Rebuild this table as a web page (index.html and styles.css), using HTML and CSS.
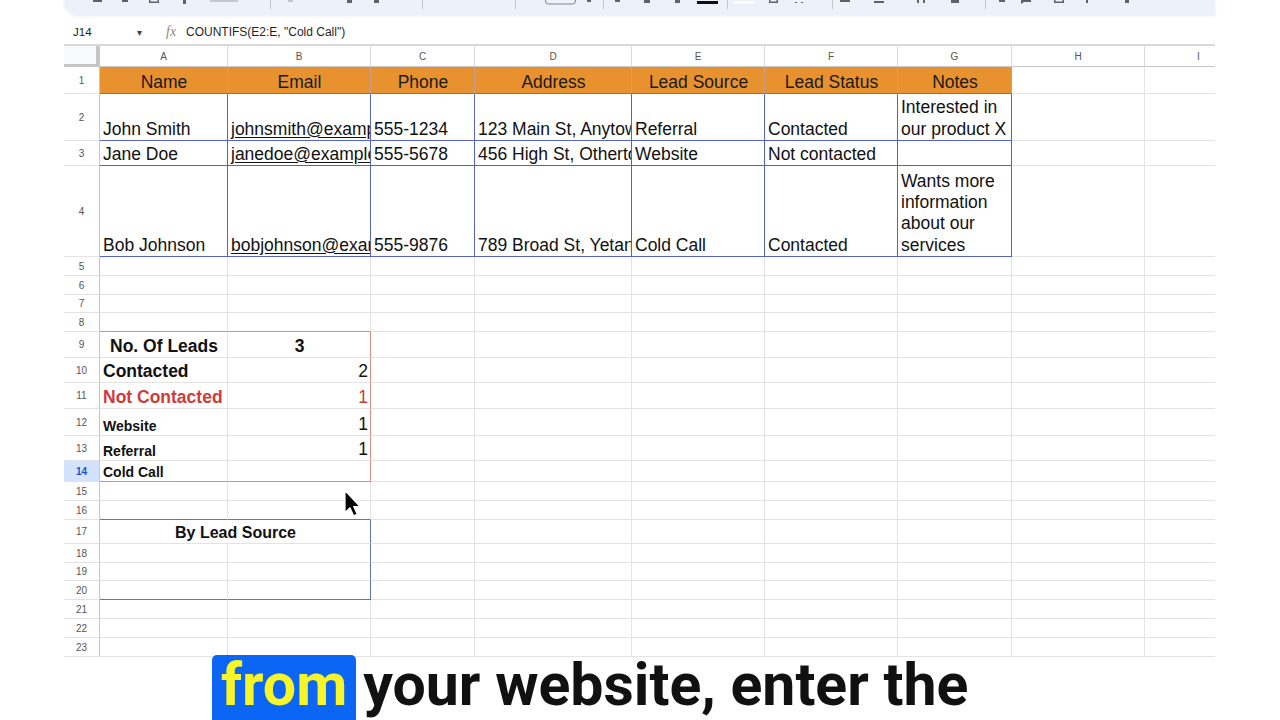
FILE: index.html
```html
<!DOCTYPE html>
<html>
<head>
<meta charset="utf-8">
<link rel="stylesheet" href="styles.css">
</head>
<body>
<div class="toolbar">
  <svg class="tb-icons" width="1151" height="15" viewBox="0 0 1151 15">
    <g fill="#5f6368">
      <rect x="29" y="0" width="9" height="2"/>
      <rect x="58" y="0" width="6" height="2"/>
      <path d="M85 0v3h10V0h-1.5v1.5h-7V0z"/>
      <rect x="119" y="0" width="3" height="4"/>
      <rect x="283" y="0" width="5" height="3"/>
      <rect x="310" y="0" width="5" height="3"/>
      <rect x="523" y="0" width="4" height="2"/>
      <rect x="551" y="0" width="5" height="2"/>
      <rect x="580" y="0" width="6" height="3"/>
      <rect x="611" y="0" width="5" height="3"/>
      <rect x="633" y="1" width="21" height="3" fill="#111"/>
      <path d="M705 0v3h9V0h-1.5v1.5h-6V0z"/>
      <rect x="731" y="2" width="2" height="1"/>
      <rect x="737" y="2" width="2" height="1"/>
      <rect x="776" y="0" width="10" height="2"/>
      <rect x="810" y="1" width="10" height="2"/>
      <rect x="853" y="0" width="2" height="3"/>
      <rect x="859" y="0" width="2" height="3"/>
      <rect x="887" y="0" width="8" height="3"/>
      <rect x="935" y="0" width="6" height="2"/>
      <path d="M957 0v4l3-2h7V0z"/>
      <path d="M990 0v3h10V0h-1.5v1.5h-7V0z"/>
      <rect x="1022" y="0" width="2" height="3"/>
      <rect x="1061" y="0" width="4" height="3"/>
    </g>
    <g fill="#c4c7cc">
      <rect x="146" y="0" width="28" height="2"/>
      <rect x="224" y="0" width="5" height="2"/>
    </g>
    <g fill="#c4c7c5">
      <rect x="206" y="0" width="1" height="9"/>
      <rect x="358" y="0" width="1" height="9"/>
      <rect x="451" y="0" width="1" height="9"/>
      <rect x="539" y="0" width="1" height="9"/>
      <rect x="663" y="0" width="1" height="9"/>
      <rect x="768" y="0" width="1" height="9"/>
      <rect x="921" y="0" width="1" height="9"/>
    </g>
    <rect x="481.5" y="-6" width="30" height="10" rx="3" fill="none" stroke="#80868b"/>
    <rect x="669" y="1" width="21" height="3" fill="#fff"/>
  </svg>
</div>

<div class="fbar">
  <span class="ref">J14</span>
  <span class="dd">&#9662;</span>
  <span class="fx">fx</span>
  <span class="formula">COUNTIFS(E2:E, "Cold Call")</span>
</div>

<div class="sheet">
  <div class="corner"></div>
  <div class="ch">A</div><div class="ch">B</div><div class="ch">C</div><div class="ch">D</div><div class="ch">E</div><div class="ch">F</div><div class="ch">G</div><div class="ch">H</div><div class="ch">I</div>

  <div class="rh">1</div>
  <div class="c hd">Name</div><div class="c hd">Email</div><div class="c hd">Phone</div><div class="c hd">Address</div><div class="c hd">Lead Source</div><div class="c hd">Lead Status</div><div class="c hd">Notes</div><div class="c"></div><div class="c"></div>

  <div class="rh">2</div>
  <div class="c bl">John Smith</div>
  <div class="c bl"><span class="u">johnsmith@example.com</span></div>
  <div class="c bl">555-1234</div>
  <div class="c bl">123 Main St, Anytown, USA</div>
  <div class="c bl">Referral</div>
  <div class="c bl">Contacted</div>
  <div class="c bl"><span>Interested in<br>our product X</span></div>
  <div class="c"></div><div class="c"></div>

  <div class="rh">3</div>
  <div class="c bl">Jane Doe</div>
  <div class="c bl"><span class="u">janedoe@example.com</span></div>
  <div class="c bl">555-5678</div>
  <div class="c bl">456 High St, Othertown, USA</div>
  <div class="c bl">Website</div>
  <div class="c bl">Not contacted</div>
  <div class="c bl"></div>
  <div class="c"></div><div class="c"></div>

  <div class="rh">4</div>
  <div class="c bl">Bob Johnson</div>
  <div class="c bl"><span class="u">bobjohnson@example.com</span></div>
  <div class="c bl">555-9876</div>
  <div class="c bl">789 Broad St, Yetanothertown, USA</div>
  <div class="c bl">Cold Call</div>
  <div class="c bl">Contacted</div>
  <div class="c bl"><span>Wants more<br>information<br>about our<br>services</span></div>
  <div class="c"></div><div class="c"></div>

  <div class="rh">5</div>
  <div class="c"></div><div class="c"></div><div class="c"></div><div class="c"></div><div class="c"></div><div class="c"></div><div class="c"></div><div class="c"></div><div class="c"></div>
  <div class="rh">6</div>
  <div class="c"></div><div class="c"></div><div class="c"></div><div class="c"></div><div class="c"></div><div class="c"></div><div class="c"></div><div class="c"></div><div class="c"></div>
  <div class="rh">7</div>
  <div class="c"></div><div class="c"></div><div class="c"></div><div class="c"></div><div class="c"></div><div class="c"></div><div class="c"></div><div class="c"></div><div class="c"></div>
  <div class="rh">8</div>
  <div class="c rb"></div><div class="c rb"></div><div class="c"></div><div class="c"></div><div class="c"></div><div class="c"></div><div class="c"></div><div class="c"></div><div class="c"></div>

  <div class="rh">9</div>
  <div class="c ctr b">No. Of Leads</div>
  <div class="c ctr b rr">3</div>
  <div class="c"></div><div class="c"></div><div class="c"></div><div class="c"></div><div class="c"></div><div class="c"></div><div class="c"></div>

  <div class="rh">10</div>
  <div class="c b">Contacted</div>
  <div class="c rt rr">2</div>
  <div class="c"></div><div class="c"></div><div class="c"></div><div class="c"></div><div class="c"></div><div class="c"></div><div class="c"></div>

  <div class="rh">11</div>
  <div class="c b red">Not Contacted</div>
  <div class="c rt rr red">1</div>
  <div class="c"></div><div class="c"></div><div class="c"></div><div class="c"></div><div class="c"></div><div class="c"></div><div class="c"></div>

  <div class="rh">12</div>
  <div class="c b sm">Website</div>
  <div class="c rt rr">1</div>
  <div class="c"></div><div class="c"></div><div class="c"></div><div class="c"></div><div class="c"></div><div class="c"></div><div class="c"></div>

  <div class="rh">13</div>
  <div class="c b sm">Referral</div>
  <div class="c rt rr">1</div>
  <div class="c"></div><div class="c"></div><div class="c"></div><div class="c"></div><div class="c"></div><div class="c"></div><div class="c"></div>

  <div class="rh sel">14</div>
  <div class="c b sm rb">Cold Call</div>
  <div class="c rr rb"></div>
  <div class="c"></div><div class="c"></div><div class="c"></div><div class="c"></div><div class="c"></div><div class="c"></div><div class="c"></div>

  <div class="rh">15</div>
  <div class="c"></div><div class="c"></div><div class="c"></div><div class="c"></div><div class="c"></div><div class="c"></div><div class="c"></div><div class="c"></div><div class="c"></div>
  <div class="rh">16</div>
  <div class="c sbb"></div><div class="c sbb"></div><div class="c"></div><div class="c"></div><div class="c"></div><div class="c"></div><div class="c"></div><div class="c"></div><div class="c"></div>

  <div class="rh">17</div>
  <div class="c m2 ctr b f16 sr">By Lead Source</div>
  <div class="c"></div><div class="c"></div><div class="c"></div><div class="c"></div><div class="c"></div><div class="c"></div><div class="c"></div>

  <div class="rh">18</div>
  <div class="c"></div><div class="c sr"></div><div class="c"></div><div class="c"></div><div class="c"></div><div class="c"></div><div class="c"></div><div class="c"></div><div class="c"></div>
  <div class="rh">19</div>
  <div class="c"></div><div class="c sr"></div><div class="c"></div><div class="c"></div><div class="c"></div><div class="c"></div><div class="c"></div><div class="c"></div><div class="c"></div>
  <div class="rh">20</div>
  <div class="c sbb"></div><div class="c sr sbb"></div><div class="c"></div><div class="c"></div><div class="c"></div><div class="c"></div><div class="c"></div><div class="c"></div><div class="c"></div>

  <div class="rh">21</div>
  <div class="c"></div><div class="c"></div><div class="c"></div><div class="c"></div><div class="c"></div><div class="c"></div><div class="c"></div><div class="c"></div><div class="c"></div>
  <div class="rh">22</div>
  <div class="c"></div><div class="c"></div><div class="c"></div><div class="c"></div><div class="c"></div><div class="c"></div><div class="c"></div><div class="c"></div><div class="c"></div>
  <div class="rh">23</div>
  <div class="c"></div><div class="c"></div><div class="c"></div><div class="c"></div><div class="c"></div><div class="c"></div><div class="c"></div><div class="c"></div><div class="c"></div>
</div>

<div class="caption"><span class="hl">from</span><span class="rest">your website, enter the</span></div>

<svg class="cursor" width="19" height="30" viewBox="0 0 19 30">
  <path d="M2 1.5 L2 23.5 L7 18.8 L10.6 26.8 L14.2 25.3 L10.7 17.5 L17 17.5 Z" fill="#000" stroke="#fff" stroke-width="1.2" stroke-linejoin="round"/>
</svg>
</body>
</html>
```

FILE: styles.css
```css
* { box-sizing: border-box; }

body {
  margin: 0;
  width: 1280px;
  height: 720px;
  overflow: hidden;
  position: relative;
  background: #ffffff;
  font-family: "Liberation Sans", Arial, sans-serif;
  color: #111;
}

/* top toolbar (cut off) */
.toolbar {
  margin-left: 64px;
  width: 1151px;
  height: 15px;
  background: #edf2fa;
  border-bottom-left-radius: 14px;
  box-shadow: 0 1px 3px rgba(60, 64, 67, 0.10);
  overflow: hidden;
}
.tb-icons { display: block; }

/* formula bar */
.fbar {
  margin-left: 64px;
  width: 1151px;
  height: 31px;
  padding-top: 5px;
  border-bottom: 2px solid #d9d9d9;
  display: flex;
  align-items: center;
  font-size: 12px;
  color: #202124;
}
.ref { width: 73px; padding-left: 9px; font-size: 11.5px; }
.dd { width: 29px; font-size: 10px; color: #444; }
.fx {
  width: 20px;
  font-family: "Liberation Serif", serif;
  font-style: italic;
  font-size: 14px;
  color: #8a8a8a;
}
.formula { font-size: 12px; color: #1f1f1f; }

/* grid */
.sheet {
  margin-left: 64px;
  width: 1151px;
  overflow: hidden;
  display: grid;
  grid-template-columns: 36px 128px 143px 104px 157px 133px 133px 114px 133px 108px;
  grid-template-rows: 21px 27px 47px 25px 91px 19px 19px 18px 19px 26px 25px 26px 27px 25px 21px 19px 19px 24px 19px 18px 19px 19px 19px 19px;
}

.corner {
  background: #f8f9fa;
  border-right: 4px solid #c4c7c5;
  border-bottom: 3px solid #c4c7c5;
}
.ch {
  display: flex;
  align-items: center;
  justify-content: center;
  font-size: 10px;
  color: #555;
  background: #fff;
  border-right: 1px solid #dadada;
  border-bottom: 1px solid #c7c7c7;
}
.rh {
  display: flex;
  align-items: center;
  justify-content: center;
  font-size: 10px;
  color: #555;
  background: #fff;
  border-right: 1px solid #c7c7c7;
  border-bottom: 1px solid #e3e3e3;
}
.rh.sel {
  background: #d3e3fd;
  color: #0b57d0;
  font-weight: bold;
}

.c {
  display: flex;
  align-items: flex-end;
  min-width: 0;
  overflow: hidden;
  white-space: nowrap;
  padding: 0 2px 0 3px;
  font-size: 17.5px;
  line-height: 21.3px;
  color: #111;
  border-right: 1px solid #e3e3e3;
  border-bottom: 1px solid #e3e3e3;
}

.hd {
  background: #e8912f;
  justify-content: center;
  color: #1a1a1a;
  border-right-color: #c99b8c;
  border-bottom-color: #6a72c4;
}
.bl {
  border-right-color: #5563c9;
  border-bottom-color: #5563c9;
}
.u { text-decoration: underline; text-underline-offset: 2px; }

.ctr { justify-content: center; }
.rt { justify-content: flex-end; }
.b { font-weight: bold; }
.sm { font-size: 14px; line-height: 17px; }
.f16 { font-size: 16px; }
.red { color: #d23a3a; }
.m2 { grid-column: span 2; }

.rr { border-right-color: #e28a8a; }
.rb { border-bottom-color: #e28a8a; }
.sr { border-right-color: #5a76b8; }
.sbb { border-bottom-color: #5a76b8; }

/* subtitle caption */
.caption {
  margin-top: -2px;
  height: 65px;
  padding-left: 212px;
  display: flex;
  align-items: flex-start;
  font-family: Roboto, "Noto Sans", sans-serif;
  font-weight: 700;
  font-size: 59px;
  line-height: 60px;
  white-space: nowrap;
}
.hl {
  background: #0b66f5;
  color: #f6f52a;
  padding: 0 9px 5px;
  border-radius: 5px 5px 0 0;
}
.rest {
  margin-left: 7px;
  color: #111;
}

/* mouse pointer over the grid */
.cursor {
  position: absolute;
  left: 343px;
  top: 489px;
}
```
